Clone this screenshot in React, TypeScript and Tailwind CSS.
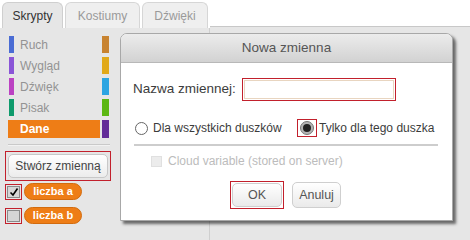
import React from 'react';

const categories = [
  { left: { name: 'Ruch', color: 'bg-[#4a6cd4]' }, right: 'bg-[#c88330]' },
  { left: { name: 'Wygląd', color: 'bg-[#8a55d7]' }, right: 'bg-[#e1a91a]' },
  { left: { name: 'Dźwięk', color: 'bg-[#bb42c3]' }, right: 'bg-[#2ca5e2]' },
  { left: { name: 'Pisak', color: 'bg-[#0e9a6c]' }, right: 'bg-[#5cb712]' },
];

function Tab({ label, active }: { label: string; active?: boolean }) {
  return (
    <div
      className={
        active
          ? 'h-[26px] w-[61px] rounded-t-[6px] border border-b-0 border-[#cfcfcf] bg-[#e6e6e6] flex items-center justify-center text-[12px] text-[#333]'
          : 'h-[26px] rounded-t-[6px] border border-b-0 border-[#d6d6d6] bg-[#efefef] flex items-center justify-center text-[12px] text-[#9a9a9a]'
      }
    >
      {label}
    </div>
  );
}

function VarRow({ label, checked }: { label: string; checked?: boolean }) {
  return (
    <div className="flex items-center gap-[2px]">
      <div className="w-[17px] h-[16px] border border-[#c2202c] flex items-center justify-center">
        <div className="w-[13px] h-[12px] border border-[#8a8a8a] bg-[#d6d6d6] flex items-center justify-center">
          {checked && (
            <svg width="10" height="10" viewBox="0 0 10 10">
              <path d="M1.5 5.5 L4 8 L8.5 1.5" fill="none" stroke="#000" strokeWidth="1.6" />
            </svg>
          )}
        </div>
      </div>
      <div className="h-[17px] w-[58px] rounded-full bg-[#ee7d16] border border-[#d26b0e] flex items-center justify-center text-[11px] font-bold text-white">
        {label}
      </div>
    </div>
  );
}

export default function App() {
  return (
    <div className="w-[470px] h-[240px] relative overflow-hidden bg-white flex font-['Liberation_Sans',Arial,sans-serif]">
      {/* left: tabs + palette */}
      <div className="w-[210px] flex flex-col">
        <div className="h-[28px] flex items-end pl-[2px] gap-[2px]">
          <Tab label="Skrypty" active />
          <div className="w-[75px]"><Tab label="Kostiumy" /></div>
          <div className="w-[66px]"><Tab label="Dźwięki" /></div>
        </div>
        <div className="flex-1 bg-[#e6e6e6] border-r border-[#cfcfcf] pt-[8px]">
          <div className="flex flex-col gap-[4px]">
            {categories.map((c) => (
              <div key={c.left.name} className="flex h-[17px]">
                <div className="w-[102px] pl-[9px] flex items-center gap-[6px]">
                  <div className={`w-[5px] h-[17px] ${c.left.color}`} />
                  <span className="text-[12px] text-[#939393]">{c.left.name}</span>
                </div>
                <div className={`w-[7px] h-[17px] ${c.right}`} />
              </div>
            ))}
            <div className="flex h-[18px]">
              <div className="w-[102px] pl-[8px]">
                <div className="w-[92px] h-[18px] bg-[#ee7d16] flex items-center pl-[12px] text-[12px] font-bold text-white">
                  Dane
                </div>
              </div>
              <div className="w-[7px] h-[18px] bg-[#632d99]" />
            </div>
          </div>
          <div className="mt-[6px] ml-[8px] w-[102px] border-t border-[#c9c9c9] border-b border-b-[#f2f2f2]" />
          <div className="mt-[5px] ml-[5px] w-[106px] h-[30px] border border-[#c2202c] p-[2px]">
            <div className="h-full rounded-[5px] border border-[#c8c8c8] bg-gradient-to-b from-white to-[#ececec] flex items-center justify-center text-[12px] text-[#444]">
              Stwórz zmienną
            </div>
          </div>
          <div className="mt-[2px] ml-[5px] flex flex-col gap-[7px]">
            <VarRow label="liczba a" checked />
            <VarRow label="liczba b" />
          </div>
        </div>
      </div>

      {/* right: scripts area */}
      <div className="flex-1 flex flex-col">
        <div className="h-[27px] bg-white border-b border-[#c8c8c8]" />
        <div className="flex-1 bg-[#e6e6e6]" />
      </div>

      {/* dialog */}
      <div className="absolute left-[120px] top-[33px] w-[333px] h-[188px] bg-white border border-[#a8a8a8] rounded-t-[7px] shadow-[3px_3px_3px_rgba(0,0,0,0.55)] flex flex-col">
        <div className="h-[29px] rounded-t-[6px] bg-gradient-to-b from-[#ececec] to-[#d2d2d2] border-b border-[#b8b8b8] flex items-center justify-center text-[13.5px] text-[#555]">
          Nowa zmienna
        </div>
        <div className="flex-1 px-[12px] flex flex-col">
          <div className="mt-[15px] flex items-center h-[23px]">
            <span className="text-[13.5px] text-[#3c3c3c] w-[109px]">Nazwa zmiennej:</span>
            <div className="w-[154px] h-[23px] border border-[#c2202c] p-px">
              <div className="w-full h-full border border-[#e8d5c0] bg-white" />
            </div>
          </div>
          <div className="mt-[17px] flex items-center h-[20px] text-[12px] text-[#3c3c3c]">
            <div className="ml-[2px] w-[13px] h-[13px] rounded-full border border-[#666] bg-white" />
            <span className="ml-[5px] w-[144px]">Dla wszystkich duszków</span>
            <div className="w-[20px] h-[18px] border border-[#c2202c] flex items-center justify-center">
              <div className="w-[14px] h-[14px] rounded-full bg-[#b4b4b4] border border-[#777] flex items-center justify-center">
                <div className="w-[8px] h-[8px] rounded-full bg-[#222]" />
              </div>
            </div>
            <span className="ml-[2px]">Tylko dla tego duszka</span>
          </div>
          <div className="mt-[6px] mx-[1px] w-[304px] h-[2px] bg-[#cdcdcd]" />
          <div className="mt-[8px] ml-[18px] flex items-center gap-[6px] h-[14px]">
            <div className="w-[11px] h-[11px] bg-[#ececec] border border-[#e0e0e0]" />
            <span className="text-[12px] text-[#bcbcbc]">Cloud variable (stored on server)</span>
          </div>
          <div className="mt-[13px] ml-[97px] flex items-center gap-[8px]">
            <div className="w-[54px] h-[28px] border border-[#c2202c] p-px">
              <div className="h-full rounded-[5px] border border-[#cfcfcf] bg-gradient-to-b from-white to-[#eaeaea] flex items-center justify-center text-[12.5px] text-[#555]">
                OK
              </div>
            </div>
            <div className="w-[49px] h-[26px] rounded-[5px] border border-[#cfcfcf] bg-gradient-to-b from-white to-[#eaeaea] flex items-center justify-center text-[12.5px] text-[#555]">
              Anuluj
            </div>
          </div>
        </div>
      </div>
    </div>
  );
}
